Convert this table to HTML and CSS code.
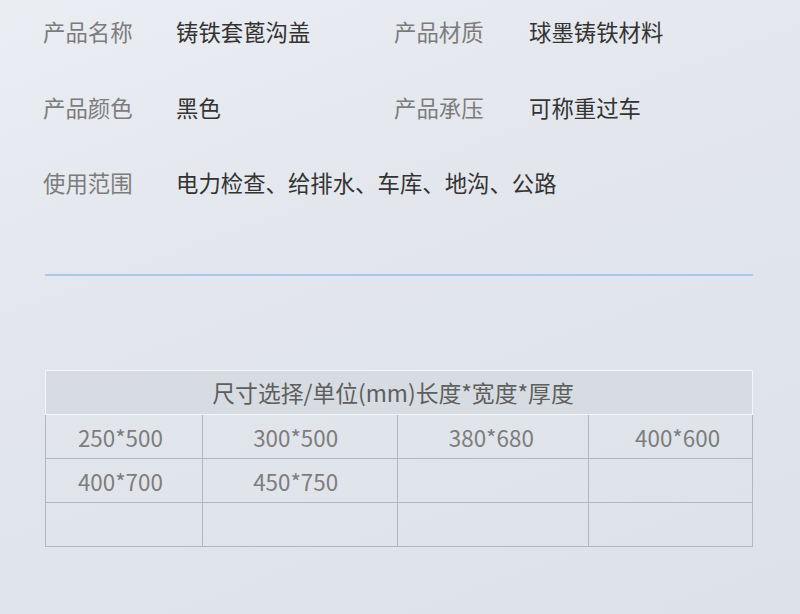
FILE: index.html
```html
<!DOCTYPE html>
<html lang="zh-CN">
<head>
    <meta charset="UTF-8">
    <meta name="viewport" content="width=device-width, initial-scale=1.0">
    <title>产品参数</title>
    <link rel="stylesheet" href="styles.css">
</head>

<body>
    <div class="page">
        <div class="params">
            <span class="label">产品名称</span>
            <span class="value">铸铁套蓖沟盖</span>
            <span class="label">产品材质</span>
            <span class="value">球墨铸铁材料</span>

            <span class="label">产品颜色</span>
            <span class="value">黑色</span>
            <span class="label">产品承压</span>
            <span class="value">可称重过车</span>

            <span class="label">使用范围</span>
            <span class="value wide">电力检查、给排水、车库、地沟、公路</span>
        </div>

        <div class="divider"></div>

        <table class="sizes">
            <tr>
                <th colspan="4">尺寸选择/单位(mm)长度*宽度*厚度</th>
            </tr>
            <tr>
                <td class="c1">250*500</td>
                <td class="c2">300*500</td>
                <td class="c3">380*680</td>
                <td class="c4">400*600</td>
            </tr>
            <tr>
                <td class="c1">400*700</td>
                <td class="c2">450*750</td>
                <td class="c3"></td>
                <td class="c4"></td>
            </tr>
            <tr>
                <td class="c1"></td>
                <td class="c2"></td>
                <td class="c3"></td>
                <td class="c4"></td>
            </tr>
        </table>
    </div>
</body>

</html>
```

FILE: styles.css
```css
* {
    margin: 0;
    padding: 0;
    box-sizing: border-box;
}

html, body {
    height: 100%;
}

body {
    font-family: "Noto Sans CJK SC", "Noto Sans", sans-serif;
    background: linear-gradient(160deg, #eaedf2 0%, #e2e6ec 45%, #dde2e9 100%);
    overflow: hidden;
}

.page {
    padding: 16px 47px 0 43px;
}

.params {
    display: grid;
    grid-template-columns: 133px 218px 135px 1fr;
    row-gap: 45.5px;
    line-height: 30px;
    font-size: 22.4px;
}

.label {
    color: #7c7c7c;
}

.value {
    color: #333;
}

.value.wide {
    grid-column: 2 / 5;
}

.divider {
    height: 2px;
    background: #a9c6ee;
    margin: 77px 0 0 2px;
}

.sizes {
    margin: 94px 0 0 2px;
    width: 708px;
    border-collapse: collapse;
    font-size: 22.4px;
}

.sizes th {
    height: 44px;
    font-weight: normal;
    font-size: 22.8px;
    color: #5e5e5e;
    background: #d7dce3;
    border: 1px solid #f4f6f9;
    padding-right: 12px;
}

.sizes td {
    height: 44px;
    text-align: center;
    color: #7d7d7d;
    border: 1px solid #b3b7bd;
}

.sizes .c1 { width: 157px; padding-right: 7px; }
.sizes .c2 { width: 196px; padding-right: 9px; }
.sizes .c3 { width: 191px; padding-right: 4px; }
.sizes .c4 { width: 164px; padding-left: 14px; }
```
